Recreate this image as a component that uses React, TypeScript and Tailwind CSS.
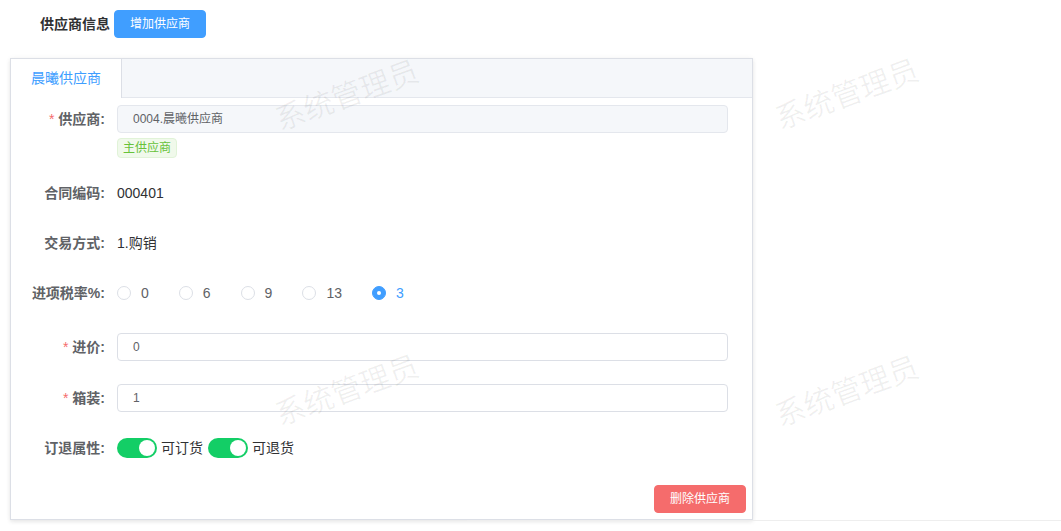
import React from "react";

const FONT = '"Liberation Sans", "Noto Sans CJK SC", sans-serif';

function Label({ text, required }: { text: string; required?: boolean }) {
  return (
    <div className="w-[106px] shrink-0 pr-[12px] text-right text-[14px] font-semibold text-[#606266] leading-[28px]">
      {required && <span className="text-[#f56c6c] mr-[4px] font-normal">*</span>}
      {text}
    </div>
  );
}

function Radio({ label, checked }: { label: string; checked?: boolean }) {
  return (
    <div className="flex items-center mr-[30px]">
      {checked ? (
        <span className="w-[14px] h-[14px] rounded-full bg-[#409eff] border border-[#409eff] flex items-center justify-center">
          <span className="w-[4px] h-[4px] rounded-full bg-white" />
        </span>
      ) : (
        <span className="w-[14px] h-[14px] rounded-full bg-white border border-[#dcdfe6]" />
      )}
      <span className={"pl-[10px] text-[14px] " + (checked ? "text-[#409eff]" : "text-[#606266]")}>{label}</span>
    </div>
  );
}

function Switch({ label }: { label: string }) {
  return (
    <div className="flex items-center mr-[5px]">
      <span className="w-[40px] h-[20px] rounded-full bg-[#13ce66] flex items-center justify-end pr-[2px]">
        <span className="w-[16px] h-[16px] rounded-full bg-white" />
      </span>
      <span className="ml-[4px] text-[14px] text-[#303133]">{label}</span>
    </div>
  );
}

function Watermark({ left, top }: { left: number; top: number }) {
  return (
    <div
      className="absolute pointer-events-none select-none text-[30px] leading-[30px] whitespace-nowrap text-[rgba(0,0,0,0.06)]"
      style={{ left, top, transform: "translate(-50%,-50%) rotate(-20deg)" }}
    >
      系统管理员
    </div>
  );
}

export default function App() {
  return (
    <div className="relative w-[1061px] h-[531px] overflow-hidden bg-white" style={{ fontFamily: FONT }}>
      <div className="flex items-center pl-[40px] pt-[10px] h-[28px] box-content">
        <span className="text-[14px] font-bold text-[#303133]">供应商信息</span>
        <button className="ml-[4px] h-[28px] px-[15px] rounded-[4px] border border-[#409eff] bg-[#409eff] text-white text-[12px] leading-[26px]">
          增加供应商
        </button>
      </div>

      <div className="mt-[20px] ml-[10px] w-[743px] h-[462px] border border-[#dcdfe6] bg-white shadow-[0_2px_4px_0_rgba(0,0,0,0.08),0_0_6px_0_rgba(0,0,0,0.04)] flex flex-col">
        <div className="flex h-[39px] shrink-0">
          <div className="px-[20px] h-[39px] leading-[39px] text-[14px] text-[#409eff] bg-white border-r border-[#dcdfe6]">
            晨曦供应商
          </div>
          <div className="flex-1 bg-[#f5f7fa] border-b border-[#e4e7ed]" />
        </div>

        <div className="flex-1 flex flex-col pt-[7px] pr-[24px] pb-[6px]">
          <div className="flex">
            <Label text="供应商:" required />
            <div className="flex-1 flex flex-col items-start">
              <div className="w-full h-[28px] border border-[#e4e7ed] bg-[#f5f7fa] rounded-[4px] pl-[15px] text-[12px] leading-[26px] text-[#606266]">
                0004.晨曦供应商
              </div>
              <span className="mt-[5px] h-[20px] px-[5px] border border-[#e1f3d8] bg-[#f0f9eb] text-[#67c23a] text-[12px] leading-[18px] rounded-[4px]">
                主供应商
              </span>
            </div>
          </div>

          <div className="flex mt-[21px]">
            <Label text="合同编码:" />
            <div className="leading-[28px] text-[14px] text-[#303133]">000401</div>
          </div>

          <div className="flex mt-[22px]">
            <Label text="交易方式:" />
            <div className="leading-[28px] text-[14px] text-[#303133]">1.购销</div>
          </div>

          <div className="flex mt-[22px]">
            <Label text="进项税率%:" />
            <div className="flex items-center h-[28px]">
              <Radio label="0" />
              <Radio label="6" />
              <Radio label="9" />
              <Radio label="13" />
              <Radio label="3" checked />
            </div>
          </div>

          <div className="flex mt-[26px]">
            <Label text="进价:" required />
            <div className="flex-1 h-[28px] border border-[#dcdfe6] bg-white rounded-[4px] pl-[15px] text-[12px] leading-[26px] text-[#606266]">
              0
            </div>
          </div>

          <div className="flex mt-[23px]">
            <Label text="箱装:" required />
            <div className="flex-1 h-[28px] border border-[#dcdfe6] bg-white rounded-[4px] pl-[15px] text-[12px] leading-[26px] text-[#606266]">
              1
            </div>
          </div>

          <div className="flex mt-[22px]">
            <Label text="订退属性:" />
            <div className="flex items-center h-[28px]">
              <Switch label="可订货" />
              <Switch label="可退货" />
            </div>
          </div>

          <div className="flex justify-end mt-auto -mr-[18px]">
            <button className="h-[28px] px-[15px] rounded-[4px] border border-[#f56c6c] bg-[#f56c6c] text-white text-[12px] leading-[26px]">
              删除供应商
            </button>
          </div>
        </div>
      </div>
      <div className="ml-[467px] h-px bg-[#eeeeee]" />

      <Watermark left={347} top={96} />
      <Watermark left={847} top={95} />
      <Watermark left={347} top={391} />
      <Watermark left={847} top={392} />
    </div>
  );
}
